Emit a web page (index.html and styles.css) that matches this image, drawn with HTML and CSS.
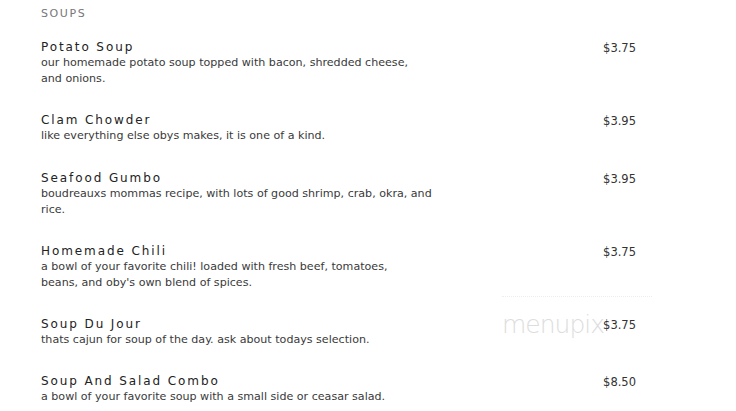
FILE: index.html
```html
<!DOCTYPE html>
<html>
<head>
<meta charset="utf-8">
<link rel="stylesheet" href="styles.css">
</head>
<body>
<div class="menu">
  <h2 class="section">SOUPS</h2>
  <div class="item">
    <div class="info"><div class="name">Potato Soup</div><div class="desc">our homemade potato soup topped with bacon, shredded cheese,<br>and onions.</div></div>
    <div class="price">$3.75</div>
  </div>
  <div class="item">
    <div class="info"><div class="name">Clam Chowder</div><div class="desc">like everything else obys makes, it is one of a kind.</div></div>
    <div class="price">$3.95</div>
  </div>
  <div class="item">
    <div class="info"><div class="name">Seafood Gumbo</div><div class="desc">boudreauxs mommas recipe, with lots of good shrimp, crab, okra, and<br>rice.</div></div>
    <div class="price">$3.95</div>
  </div>
  <div class="item">
    <div class="info"><div class="name">Homemade Chili</div><div class="desc">a bowl of your favorite chili! loaded with fresh beef, tomatoes,<br>beans, and oby's own blend of spices.</div></div>
    <div class="price">$3.75</div>
  </div>
  <div class="item">
    <div class="info"><div class="name">Soup Du Jour</div><div class="desc">thats cajun for soup of the day. ask about todays selection.</div></div>
    <div class="price">$3.75</div>
  </div>
  <div class="item">
    <div class="info"><div class="name">Soup And Salad Combo</div><div class="desc">a bowl of your favorite soup with a small side or ceasar salad.</div></div>
    <div class="price">$8.50</div>
  </div>
  <div class="watermark">menupix</div>
</div>
</body>
</html>
```
FILE: styles.css
```css
html, body {
  margin: 0;
  padding: 0;
  background: #fff;
}
body {
  font-family: "DejaVu Sans", Verdana, sans-serif;
  color: #333;
}
.menu {
  position: relative;
  width: 595px;
  padding: 6px 0 0 41px;
}
.section {
  margin: 0 0 17px 0;
  font-size: 11px;
  font-weight: normal;
  letter-spacing: 1.6px;
  color: #777;
  line-height: 16px;
}
.item {
  display: flex;
  justify-content: space-between;
  align-items: flex-start;
  margin-bottom: 25.3px;
}
.info {
  width: 400px;
}
.name {
  font-size: 12px;
  letter-spacing: 1.9px;
  color: #222;
  line-height: 16px;
}
.desc {
  font-size: 11.1px;
  line-height: 16px;
  color: #3a3a3a;
  white-space: nowrap;
}
.price {
  font-size: 11.5px;
  line-height: 16px;
  color: #333;
  padding-top: 1px;
}
.watermark {
  position: absolute;
  left: 502px;
  top: 296px;
  width: 150px;
  border-top: 1px dotted #eee;
  padding-top: 13px;
  font-size: 25px;
  font-weight: 200;
  color: #ddd;
  font-family: "DejaVu Sans", sans-serif;
  letter-spacing: -1px;
}
```
